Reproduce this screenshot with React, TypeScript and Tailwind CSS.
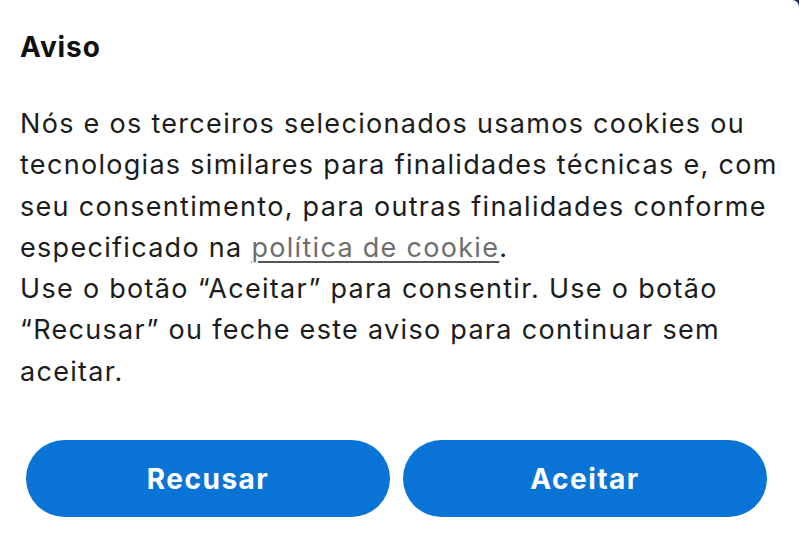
import React from "react";

export default function App() {
  const font = { fontFamily: "Inter, 'Noto Sans', sans-serif" };
  return (
    <div className="w-[799px] h-[539px] bg-[#1f2d6b] overflow-hidden" style={font}>
      <div className="w-full h-full bg-white rounded-tr-[7px] flex flex-col">
        <div className="pl-[20px] pt-[30px]">
          <h1 className="text-[28px] leading-[34px] font-bold text-[#111111] tracking-[0.9px]">Aviso</h1>
          <p className="mt-[39px] text-[27px] leading-[41.3px] text-[#1c1c1c] tracking-[1.3px]">
            Nós e os terceiros selecionados usamos cookies ou
            <br />
            tecnologias similares para finalidades técnicas e, com
            <br />
            seu consentimento, para outras finalidades conforme
            <br />
            especificado na{" "}
            <span className="text-[#6e6e6e] underline decoration-[2px] decoration-[#555555] underline-offset-[4px]">
              política de cookie
            </span>
            .
            <br />
            Use o botão “Aceitar” para consentir. Use o botão
            <br />
            “Recusar” ou feche este aviso para continuar sem
            <br />
            aceitar.
          </p>
        </div>
        <div className="mt-[48px] pl-[26px] pr-[32px] flex gap-[13px]">
          <button className="flex-1 h-[77px] rounded-full bg-[#0a74d6] text-white text-[28px] font-bold tracking-[1.5px] flex items-center justify-center">
            Recusar
          </button>
          <button className="flex-1 h-[77px] rounded-full bg-[#0a74d6] text-white text-[28px] font-bold tracking-[1.5px] flex items-center justify-center">
            Aceitar
          </button>
        </div>
      </div>
    </div>
  );
}
